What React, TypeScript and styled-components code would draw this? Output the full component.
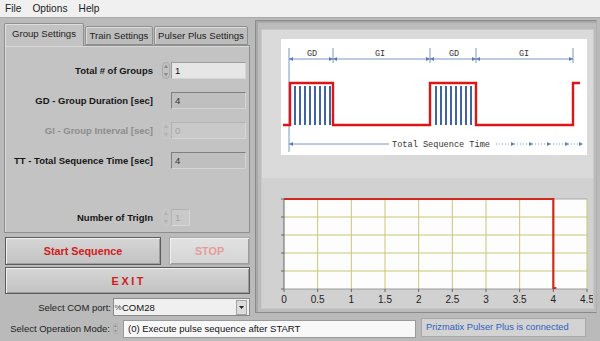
import React from 'react';
import styled, { createGlobalStyle } from 'styled-components';

const GlobalStyle = createGlobalStyle`
    html, body {
        margin: 0;
        padding: 0;
    }
    body {
        width: 600px;
        height: 341px;
        overflow: hidden;
        background: #bababa;
        font-family: "Liberation Sans", Arial, sans-serif;
        color: #1a1a1a;
    }
`;

const BLUE = '#5b7fb4';
const RED = '#dc1515';

const Spinner = ({ disabled }: { disabled?: boolean }) => {
    const c = disabled ? '#b3b3b3' : '#8c8c8c';
    return (
        <SpinnerBox>
            <svg width="8" height="17" viewBox="0 0 8 17">
                <rect x="0.5" y="0.5" width="7" height="16" rx="3.5" fill="none" stroke={disabled ? '#c9c9c9' : '#a9a9a9'} />
                <path d="M4 2.5 L6.2 6 H1.8 Z" fill={c} />
                <path d="M4 14.5 L6.2 11 H1.8 Z" fill={c} />
            </svg>
        </SpinnerBox>
    );
};

const Arrow = ({ x1, x2, y }: { x1: number; x2: number; y: number }) => (
    <g>
        <line x1={x1} y1={y} x2={x2} y2={y} stroke={BLUE} strokeWidth="0.8" />
        <path d={`M${x1} ${y} l4 -2 v4 Z`} fill={BLUE} />
        <path d={`M${x2} ${y} l-4 -2 v4 Z`} fill={BLUE} />
    </g>
);

const bars = (from: number) =>
    Array.from({ length: 8 }, (_, i) => (
        <rect key={from + i} x={from + i * 5} y="47" width="2" height="39" fill="#3f63a3" />
    ));

const SequenceDiagram = () => (
    <svg width="306" height="116" viewBox="0 0 306 116">
        <rect width="306" height="116" fill="#fff" />
        <g stroke={BLUE} strokeWidth="0.8">
            <line x1="8" y1="9" x2="8" y2="113" />
            <line x1="52" y1="9" x2="52" y2="24" />
            <line x1="149" y1="9" x2="149" y2="24" />
            <line x1="195" y1="9" x2="195" y2="24" />
            <line x1="292" y1="9" x2="292" y2="24" />
        </g>
        <Arrow x1={8} x2={52} y={20} />
        <Arrow x1={52} x2={149} y={20} />
        <Arrow x1={149} x2={195} y={20} />
        <Arrow x1={195} x2={292} y={20} />
        <g fontFamily="'Liberation Mono', monospace" fontSize="8.5" fill="#333" textAnchor="middle">
            <text x="31" y="17">GD</text>
            <text x="99" y="17">GI</text>
            <text x="173" y="17">GD</text>
            <text x="243" y="17">GI</text>
        </g>
        {bars(13)}
        {bars(154)}
        <path
            d="M2 86 H9 V44 H52 V86 H149 V44 H195 V86 H292 V44 H299"
            fill="none"
            stroke={RED}
            strokeWidth="2.4"
        />
        <line x1="8" y1="105" x2="108" y2="105" stroke={BLUE} strokeWidth="0.8" />
        <path d="M8 105 l4 -2 v4 Z" fill={BLUE} />
        <text x="111" y="108" fontFamily="'Liberation Mono', monospace" fontSize="8.6" fill="#333">
            Total Sequence Time
        </text>
        <line x1="215" y1="105" x2="302" y2="105" stroke={BLUE} strokeWidth="0.8" strokeDasharray="1 2" />
        {[234, 252, 270, 288, 302].map((x) => (
            <path key={x} d={`M${x} 105 l-4 -2 v4 Z`} fill={BLUE} />
        ))}
    </svg>
);

const PLOT_L = 22;
const PLOT_R = 325;
const PLOT_T = 21;
const PLOT_B = 111;
const xOf = (v: number) => PLOT_L + ((PLOT_R - PLOT_L) * v) / 4.5;
const xTicks = ['0', '0.5', '1', '1.5', '2', '2.5', '3', '3.5', '4', '4.5'];

const TimeChart = () => (
    <svg width="331" height="130" viewBox="0 0 331 130">
        <rect x={PLOT_L} y={PLOT_T} width={PLOT_R - PLOT_L} height={PLOT_B - PLOT_T} fill="#fdfdfd" />
        <g stroke="#c8c879" strokeWidth="1">
            {xTicks.slice(1).map((_, i) => (
                <line key={i} x1={xOf((i + 1) * 0.5)} y1={PLOT_T} x2={xOf((i + 1) * 0.5)} y2={PLOT_B} />
            ))}
            {[1, 2, 3, 4].map((j) => (
                <line key={j} x1={PLOT_L} y1={PLOT_T + j * 18} x2={PLOT_R} y2={PLOT_T + j * 18} />
            ))}
        </g>
        <line x1={PLOT_L} y1={PLOT_T} x2={PLOT_R} y2={PLOT_T} stroke="#a8a8a8" />
        <g stroke="#666" strokeWidth="1">
            <line x1={PLOT_L} y1={PLOT_T} x2={PLOT_L} y2={PLOT_B} />
            <line x1={PLOT_L} y1={PLOT_B} x2={PLOT_R} y2={PLOT_B} stroke="#9a9a9a" />
            {[0, 1, 2, 3, 4, 5].map((j) => (
                <line key={j} x1={PLOT_L - 3} y1={PLOT_T + j * 18} x2={PLOT_L} y2={PLOT_T + j * 18} />
            ))}
            {xTicks.map((_, i) => (
                <line key={i} x1={xOf(i * 0.5)} y1={PLOT_B} x2={xOf(i * 0.5)} y2={PLOT_B + 3} />
            ))}
        </g>
        <path
            d={`M${PLOT_L} ${PLOT_T} H${xOf(4)} V${PLOT_B - 1} H${xOf(4) + 3}`}
            fill="none"
            stroke="#cf2a1f"
            strokeWidth="2.2"
        />
        <g fontFamily="'Liberation Sans', Arial, sans-serif" fontSize="10" fill="#222" textAnchor="middle">
            {xTicks.map((t, i) => (
                <text key={t} x={xOf(i * 0.5)} y="125">
                    {t}
                </text>
            ))}
        </g>
    </svg>
);

const App = () => (
    <>
        <GlobalStyle />
        <Window>
            <MenuBar>
                <MenuItem>File</MenuItem>
                <MenuItem>Options</MenuItem>
                <MenuItem>Help</MenuItem>
            </MenuBar>
            <TopRow>
                <LeftColumn>
                    <TabStrip>
                        <Tab $active $width={80}>
                            Group Settings
                        </Tab>
                        <Tab $width={68}>Train Settings</Tab>
                        <Tab $width={94}>Pulser Plus Settings</Tab>
                    </TabStrip>
                    <TabBody>
                        <FieldRow>
                            <FieldLabel>Total # of Groups</FieldLabel>
                            <Spinner />
                            <ValueBox $variant="control">1</ValueBox>
                        </FieldRow>
                        <FieldRow>
                            <FieldLabel>GD - Group Duration [sec]</FieldLabel>
                            <span />
                            <ValueBox $variant="indicator">4</ValueBox>
                        </FieldRow>
                        <FieldRow>
                            <FieldLabel $disabled>GI - Group Interval [sec]</FieldLabel>
                            <Spinner disabled />
                            <ValueBox $variant="disabled">0</ValueBox>
                        </FieldRow>
                        <FieldRow>
                            <FieldLabel>TT - Total Sequence Time [sec]</FieldLabel>
                            <span />
                            <ValueBox $variant="indicator">4</ValueBox>
                        </FieldRow>
                        <FieldRow $gapTop={40}>
                            <FieldLabel>Number of TrigIn</FieldLabel>
                            <Spinner disabled />
                            <ValueBox $variant="disabled" $width={19}>
                                1
                            </ValueBox>
                        </FieldRow>
                    </TabBody>
                    <ButtonRow>
                        <PanelButton>Start Sequence</PanelButton>
                        <PanelButton $muted>STOP</PanelButton>
                    </ButtonRow>
                    <ExitButton>EXIT</ExitButton>
                    <ComRow>
                        <SmallLabel>Select COM port:</SmallLabel>
                        <Dropdown>
                            <VisaIcon>%</VisaIcon>
                            <DropdownText>COM28</DropdownText>
                            <DropdownArrow>
                                <svg width="5" height="3" viewBox="0 0 5 3">
                                    <path d="M0 0 H5 L2.5 3 Z" fill="#222" />
                                </svg>
                            </DropdownArrow>
                        </Dropdown>
                    </ComRow>
                </LeftColumn>
                <RightPanel>
                    <PanelInner>
                        <DiagramArea>
                            <SequenceDiagram />
                        </DiagramArea>
                        <ChartArea>
                            <TimeChart />
                        </ChartArea>
                    </PanelInner>
                </RightPanel>
            </TopRow>
            <BottomRow>
                <SmallLabel>Select Operation Mode:</SmallLabel>
                <Spinner />
                <ModeBox>(0) Execute pulse sequence after START</ModeBox>
                <StatusBox>Prizmatix Pulser Plus is connected</StatusBox>
            </BottomRow>
        </Window>
    </>
);

const Window = styled.div`
    display: flex;
    flex-direction: column;
    width: 600px;
    height: 341px;
`;

const MenuBar = styled.div`
    display: flex;
    align-items: center;
    gap: 11px;
    height: 17px;
    padding-left: 5px;
    background: #f0f0f0;
    border-bottom: 1px solid #a9a9a9;
`;

const MenuItem = styled.span`
    font-size: 10.2px;
    color: #222;
`;

const TopRow = styled.div`
    display: flex;
    align-items: flex-start;
    gap: 5px;
    margin-top: 2px;
    padding-left: 4px;
`;

const LeftColumn = styled.div`
    display: flex;
    flex-direction: column;
    width: 246px;
    padding-top: 3px;
`;

const TabStrip = styled.div`
    display: flex;
    align-items: flex-end;
    gap: 1px;
    height: 22px;
    position: relative;
    z-index: 1;
`;

const Tab = styled.div<{ $active?: boolean; $width: number }>`
    display: flex;
    align-items: center;
    justify-content: center;
    width: ${({ $width }) => $width}px;
    height: ${({ $active }) => ($active ? '23px' : '19px')};
    margin-bottom: ${({ $active }) => ($active ? '-1px' : '0')};
    padding-bottom: ${({ $active }) => ($active ? '3px' : '0')};
    box-sizing: border-box;
    background: ${({ $active }) => ($active ? '#c3c3c3' : '#bdbdbd')};
    border: 1px solid #8f8f8f;
    border-bottom: ${({ $active }) => ($active ? 'none' : '1px solid #8f8f8f')};
    border-radius: 2px 2px 0 0;
    box-shadow: inset 1px 1px 0 #dedede;
    font-size: 9.6px;
    color: #1e1e1e;
    white-space: nowrap;
`;

const TabBody = styled.div`
    display: flex;
    flex-direction: column;
    gap: 13px;
    height: 188px;
    box-sizing: border-box;
    padding-top: 16px;
    background: #c3c3c3;
    border: 1px solid #8f8f8f;
    box-shadow: inset 1px 1px 0 #d9d9d9;
`;

const FieldRow = styled.div<{ $gapTop?: number }>`
    display: grid;
    grid-template-columns: 148px 18px auto;
    align-items: center;
    height: 17px;
    margin-top: ${({ $gapTop }) => ($gapTop ? `${$gapTop - 13}px` : '0')};
`;

const FieldLabel = styled.div<{ $disabled?: boolean }>`
    text-align: right;
    font-size: 9.5px;
    font-weight: bold;
    color: ${({ $disabled }) => ($disabled ? '#8d8d8d' : '#161616')};
    white-space: nowrap;
`;

const SpinnerBox = styled.div`
    display: flex;
    justify-content: flex-end;
    align-items: center;
    padding-right: 1px;
`;

const valueStyles = {
    control: 'background: #e6e6e6; border-color: #9d9d9d #d6d6d6 #d6d6d6 #9d9d9d; color: #111;',
    indicator: 'background: #bfbfbf; border-color: #7f7f7f #d4d4d4 #d4d4d4 #7f7f7f; color: #333;',
    disabled: 'background: #c9c9c9; border-color: #b3b3b3 #d6d6d6 #d6d6d6 #b3b3b3; color: #a3a3a3;',
};

const ValueBox = styled.div<{ $variant: keyof typeof valueStyles; $width?: number }>`
    width: ${({ $width }) => $width ?? 75}px;
    height: 17px;
    box-sizing: border-box;
    padding-left: 3px;
    border: 1px solid;
    ${({ $variant }) => valueStyles[$variant]}
    font-size: 9.5px;
    line-height: 15px;
`;

const ButtonRow = styled.div`
    display: grid;
    grid-template-columns: 156px 1fr;
    gap: 8px;
    margin-top: 4px;
    padding-left: 1px;
`;

const PanelButton = styled.div<{ $muted?: boolean }>`
    display: flex;
    align-items: center;
    justify-content: center;
    height: 28px;
    box-sizing: border-box;
    border: 1px solid ${({ $muted }) => ($muted ? '#a9a9a9' : '#5c5c5c')};
    background: ${({ $muted }) => ($muted ? 'linear-gradient(#e2e2e2, #d4d4d4)' : 'linear-gradient(#d6d6d6, #c2c2c2)')};
    box-shadow: inset 1px 1px 0 #f0f0f0, inset -1px -1px 0 #9d9d9d;
    color: ${({ $muted }) => ($muted ? '#e79b9b' : '#d01c1c')};
    font-size: 10.8px;
    font-weight: bold;
`;

const ExitButton = styled(PanelButton)`
    height: 27px;
    margin: 2px 0 0 1px;
    letter-spacing: 2.6px;
    padding-left: 2.6px;
`;

const ComRow = styled.div`
    display: grid;
    grid-template-columns: 107px 1fr;
    align-items: center;
    gap: 2px;
    height: 18px;
    margin-top: 4px;
`;

const SmallLabel = styled.div`
    text-align: right;
    font-size: 9.5px;
    color: #1e1e1e;
    white-space: nowrap;
`;

const Dropdown = styled.div`
    display: flex;
    align-items: center;
    height: 18px;
    box-sizing: border-box;
    border: 1px solid #8a8a8a;
    background: #f0f0f0;
`;

const VisaIcon = styled.span`
    width: 8px;
    font-size: 8px;
    color: #444;
    text-align: center;
`;

const DropdownText = styled.span`
    flex: 1;
    font-size: 9.5px;
    color: #111;
`;

const DropdownArrow = styled.div`
    display: flex;
    align-items: center;
    justify-content: center;
    width: 9px;
    height: 13px;
    margin-right: 2px;
    background: #dcdcdc;
    border: 1px solid #a3a3a3;
`;

const RightPanel = styled.div`
    width: 342px;
    height: 293px;
    box-sizing: border-box;
    padding: 9px 3px 4px 6px;
    background: #bcbcbc;
    border: 1px solid #8a8a8a;
    border-right-color: #b0b0b0;
    box-shadow: inset 2px 2px 0 #a9a9a9;
`;

const PanelInner = styled.div`
    display: flex;
    flex-direction: column;
    width: 331px;
    height: 278px;
    box-shadow: 0 0 0 1px #c7c7c7;
`;

const DiagramArea = styled.div`
    height: 148px;
    box-sizing: border-box;
    padding: 9px 0 0 19px;
    background: #dadada;
`;

const ChartArea = styled.div`
    display: flex;
    flex: 1;
    background: #d1d1d1;
`;

const BottomRow = styled.div`
    display: grid;
    grid-template-columns: 106px 9px 297px 170px;
    align-items: center;
    column-gap: 0;
    height: 19px;
    margin-top: 3px;
    padding-left: 4px;

    & > :nth-child(2) {
        justify-content: center;
        margin-left: 3px;
    }
`;

const ModeBox = styled.div`
    height: 18px;
    box-sizing: border-box;
    margin-left: 4px;
    padding-left: 4px;
    background: #f8f8f8;
    border: 1px solid #9a9a9a;
    font-size: 9.5px;
    line-height: 16px;
    color: #111;
`;

const StatusBox = styled.div`
    height: 19px;
    box-sizing: border-box;
    margin: -2px 0 0 5px;
    padding-left: 4px;
    background: #d3d3d3;
    border: 1px solid #a8a8a8;
    font-size: 9.3px;
    line-height: 17px;
    color: #2f5fbf;
`;

export default App;
